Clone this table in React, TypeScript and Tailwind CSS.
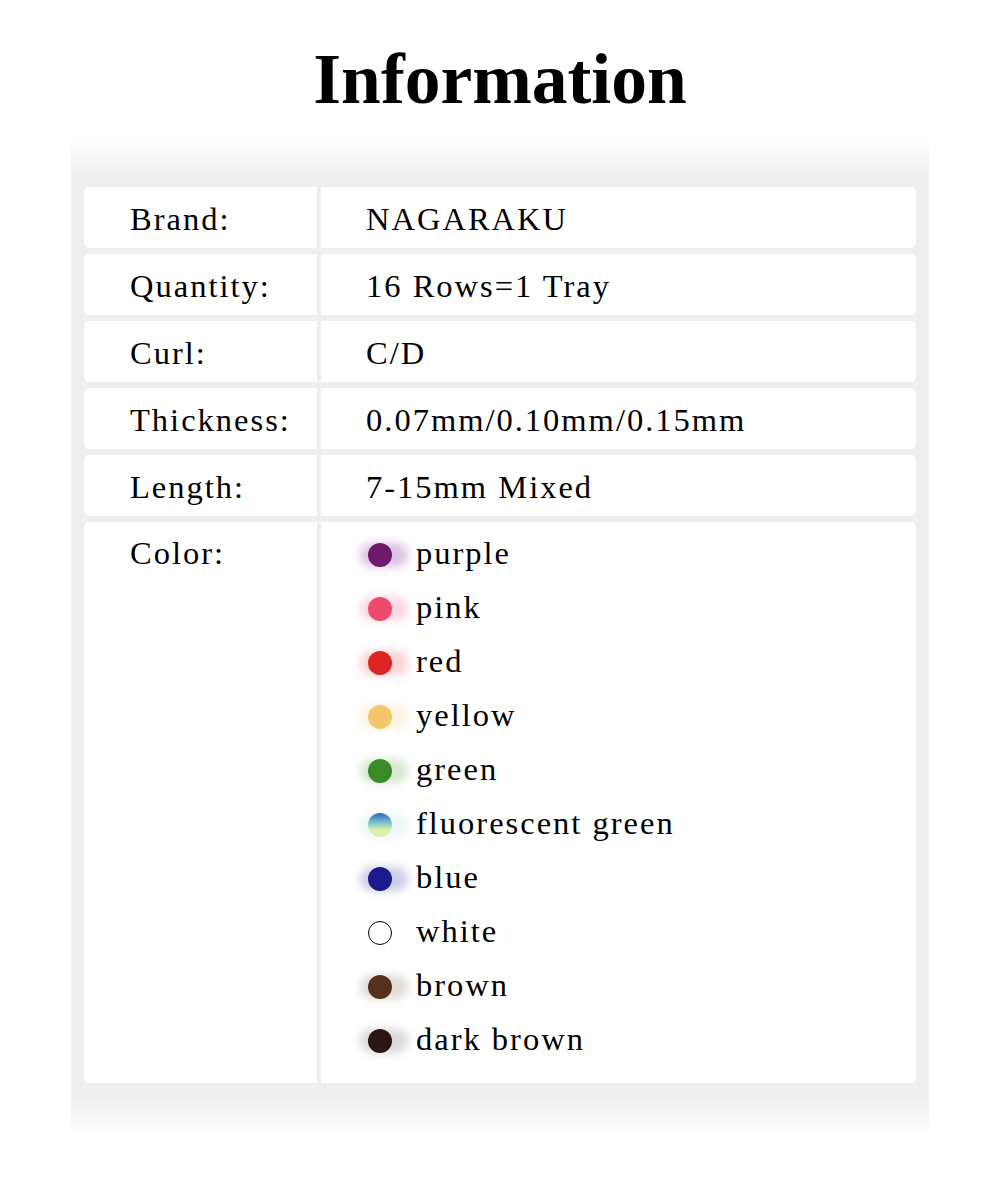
import React from "react";

const rows: { label: string; value: string }[] = [
  { label: "Brand:", value: "NAGARAKU" },
  { label: "Quantity:", value: "16 Rows=1 Tray" },
  { label: "Curl:", value: "C/D" },
  { label: "Thickness:", value: "0.07mm/0.10mm/0.15mm" },
  { label: "Length:", value: "7-15mm Mixed" },
];

const colors: { name: string; dot: string; halo: string }[] = [
  { name: "purple", dot: "bg-[#6e1a6c]", halo: "bg-[#8a3a9a]" },
  { name: "pink", dot: "bg-[#ee4a6e]", halo: "bg-[#f27a98]" },
  { name: "red", dot: "bg-[#df2424]", halo: "bg-[#ec6a6a]" },
  { name: "yellow", dot: "bg-[#f4c76a]", halo: "bg-[#f8dc9c]" },
  { name: "green", dot: "bg-[#3a8a28]", halo: "bg-[#7ab46a]" },
  {
    name: "fluorescent green",
    dot: "bg-[linear-gradient(to_bottom,#2a66c2_0%,#7fc0d0_40%,#d6f0a6_70%,#e0f4b0_100%)]",
    halo: "bg-[#c8e4ea]",
  },
  { name: "blue", dot: "bg-[#1b1a8c]", halo: "bg-[#5a5ab0]" },
  { name: "white", dot: "bg-white border-[1.5px] border-black", halo: "bg-transparent" },
  { name: "brown", dot: "bg-[#56301c]", halo: "bg-[#9a8a80]" },
  { name: "dark brown", dot: "bg-[#2c1612]", halo: "bg-[#8a8280]" },
];

const serif = "font-['Liberation_Serif','Times_New_Roman',serif]";

export default function App() {
  return (
    <div className={`w-[1000px] h-[1178px] bg-white text-black ${serif}`}>
      <div className="h-[140px] pt-[43px] flex justify-center">
        <h1 className="text-[71.5px] leading-[71px] font-bold">Information</h1>
      </div>
      <div className="mx-[71px] pt-[47px] pb-[53px] px-[13px] bg-[linear-gradient(to_bottom,#ffffff_0px,#eeeeee_36px,#eeeeee_calc(100%-40px),#ffffff_100%)]">
        <div className="flex flex-col gap-[6px]">
          {rows.map((r) => (
            <div key={r.label} className="flex h-[61px] gap-[4px] text-[32.5px] tracking-[2px] leading-[30px]">
              <div className="w-[233px] bg-white rounded-l-[5px] flex items-center pl-[46px] pt-[2px]">
                {r.label}
              </div>
              <div className="flex-1 bg-white rounded-r-[5px] flex items-center pl-[45px] pt-[2px]">
                {r.value}
              </div>
            </div>
          ))}
          <div className="flex gap-[4px] text-[32.5px] tracking-[2px] leading-[54px]">
            <div className="w-[233px] bg-white rounded-l-[5px] pl-[46px] pt-[4px]">Color:</div>
            <div className="flex-1 bg-white rounded-r-[5px] pl-[47px] pt-[4px] pb-[17px] flex flex-col">
              {colors.map((c) => (
                <div key={c.name} className="flex items-center h-[54px]">
                  <div className="relative w-[24px] h-[24px] mt-[3px] mr-[24px] shrink-0">
                    <div className={`absolute left-[-8px] right-[-16px] top-[0px] bottom-[0px] rounded-full blur-[4px] opacity-30 ${c.halo}`} />
                    <div className={`absolute inset-0 rounded-full ${c.dot}`} />
                  </div>
                  <span>{c.name}</span>
                </div>
              ))}
            </div>
          </div>
        </div>
      </div>
    </div>
  );
}
